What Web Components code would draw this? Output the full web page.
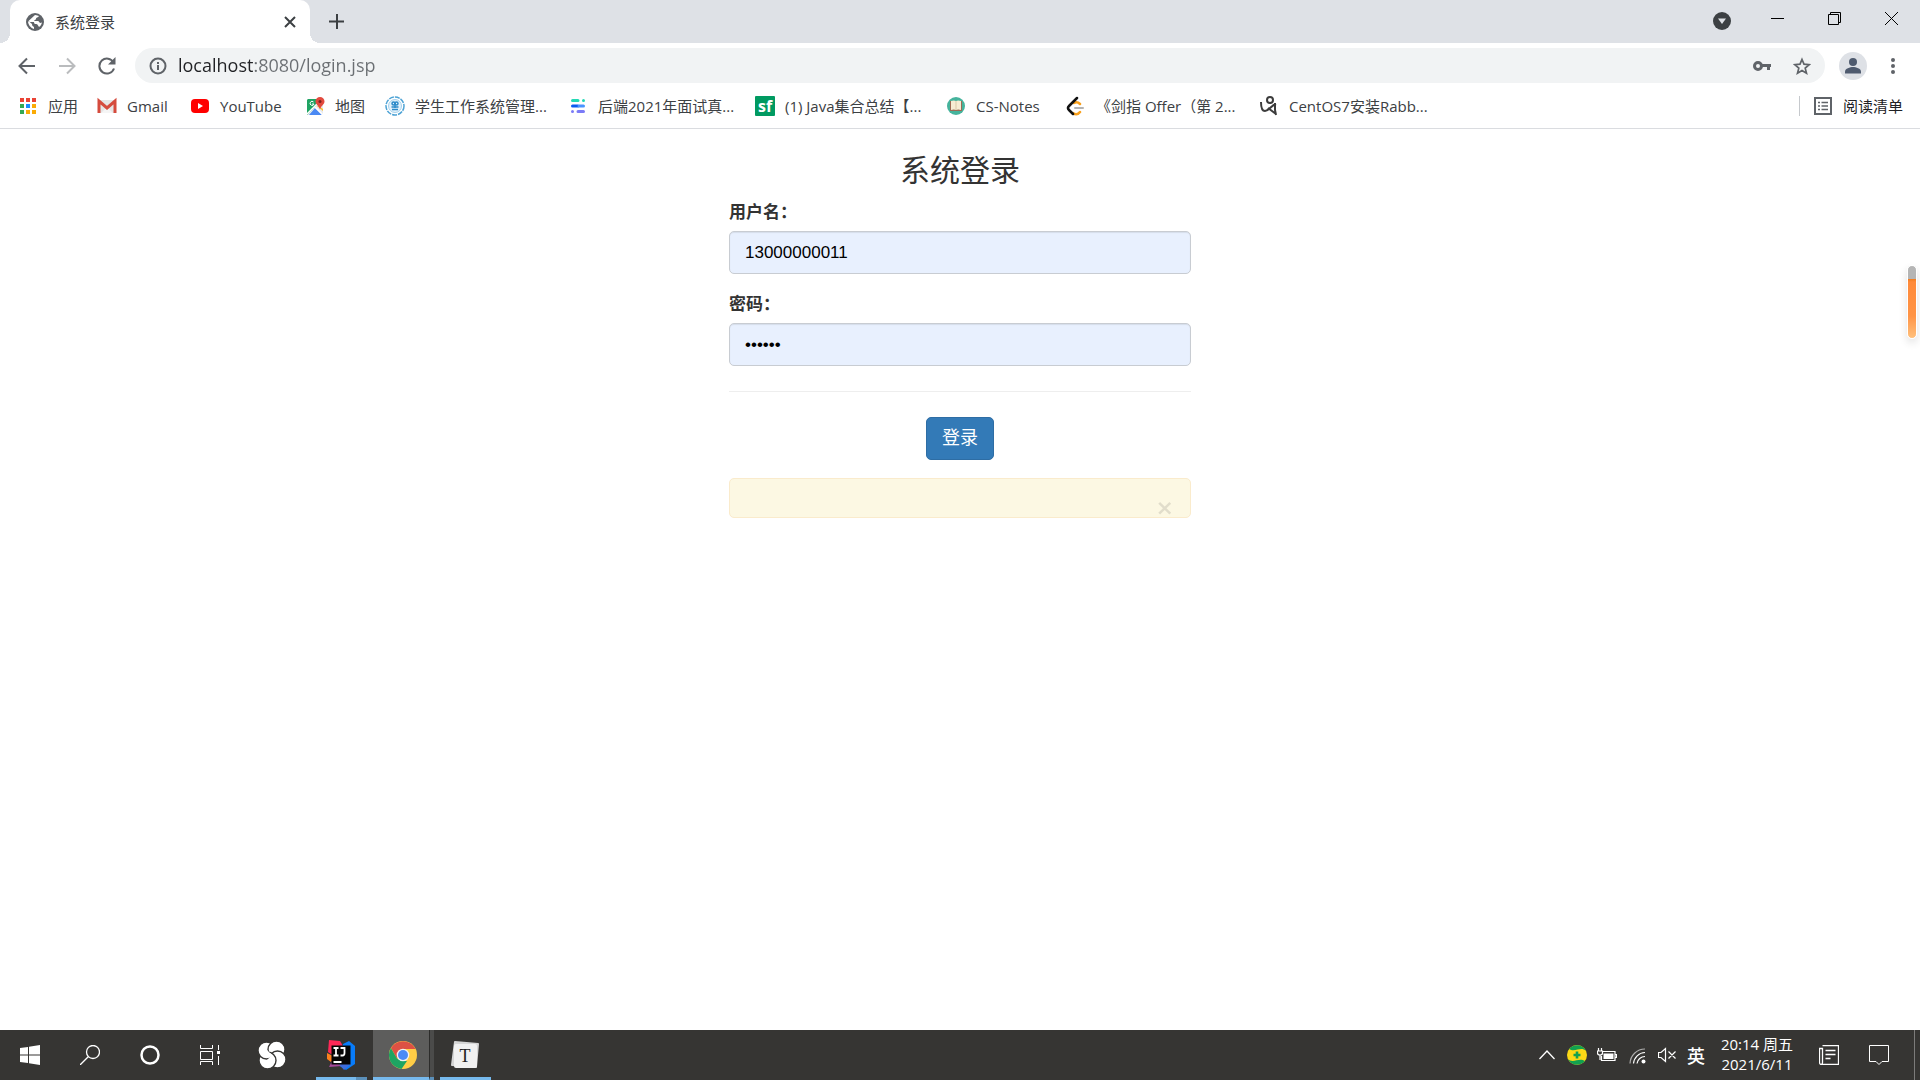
<!DOCTYPE html>
<html lang="zh-CN">
<head>
<meta charset="utf-8">
<title>系统登录</title>
<style>
    body {
        margin: 0;
        min-height: 100vh;
        display: flex;
        flex-direction: column;
        background: #fff;
        font-family: "Open Sans", "Noto Sans CJK SC", sans-serif;
        font-size: 15px;
        color: #3c4043;
    }
    main { flex: 1; }
</style>
</head>
<body>
<tab-strip>
    <browser-tab>系统登录</browser-tab>
</tab-strip>
<nav-bar></nav-bar>
<bookmark-bar>
    <book-mark>
        <svg slot="icon" width="20" height="20" viewBox="0 0 20 20"><g fill="#ea4335"><path d="M2 2h4v4H2zM8 2h4v4H8zM14 2h4v4h-4z"/></g><path fill="#34a853" d="M2 8h4v4H2zM2 14h4v4H2z"/><path fill="#1a8cff" d="M8 8h4v4H8z"/><path fill="#fbab05" d="M14 8h4v4h-4zM8 14h4v4H8zM14 14h4v4h-4z"/></svg>
        应用
    </book-mark>
    <book-mark>
        <svg slot="icon" width="20" height="20" viewBox="0 0 20 20"><path fill="#e5e5e5" d="M2 4h16v13H2z"/><path fill="#f5f5f5" d="M4 17l6-6 6 6z"/><path fill="none" stroke="#d54b3d" stroke-width="3" d="M2 17V5l8 7 8-7v12"/></svg>
        Gmail
    </book-mark>
    <book-mark>
        <svg slot="icon" width="20" height="20" viewBox="0 0 20 20"><rect x="1" y="3" width="18" height="14" rx="4" fill="#f00"/><path fill="#fff" d="M8 7l5 3-5 3z"/></svg>
        YouTube
    </book-mark>
    <book-mark>
        <svg slot="icon" width="20" height="20" viewBox="0 0 20 20"><rect x="2" y="3" width="16" height="16" rx="1" fill="#e8eaed"/><path fill="#1fa463" d="M3 3h11l-3 7-9 9V4z"/><path fill="#fbc02d" d="M14 10l4 3v2l-6-5z"/><path fill="#4a89f3" d="M4 19l6-7 7 7z"/><path stroke="#fff" stroke-width="1.500" d="M2 18l11-11M10 11l8 8"/><path fill="none" stroke="#fff" d="M8.500 6A2 2 0 1 0 9 8H7"/><path fill="#e24a3e" d="M15 1a4.500 4.500 0 0 1 4.500 4.500c0 3-3.500 4-4.500 8-1-4-4.500-5-4.500-8A4.500 4.500 0 0 1 15 1z"/><circle cx="15" cy="5.500" r="1.500" fill="#7b231e"/></svg>
        地图
    </book-mark>
    <book-mark>
        <svg slot="icon" width="20" height="20" viewBox="0 0 20 20"><circle cx="10" cy="10" r="9" fill="#fff" stroke="#4ea3d5" stroke-width="1.500" stroke-dasharray="5 1"/><circle cx="10" cy="10" r="6.500" fill="#e4f2fb" stroke="#a5d1ec"/><g fill="none" stroke="#2d8bc9" stroke-width="1.500"><circle cx="8.500" cy="7.500" r="1.500"/><circle cx="11.500" cy="7.500" r="1.500"/><path d="M10 6v6M6.500 11h7M7 13.500h6"/></g></svg>
        学生工作系统管理...
    </book-mark>
    <book-mark>
        <svg slot="icon" width="20" height="20" viewBox="0 0 20 20"><g stroke-width="3" stroke-linecap="round"><path stroke="#22d9b4" d="M4.500 4.500H10M15.500 4.500h0"/><path stroke="#0a5cf0" d="M4.500 10H10"/><path stroke="#4a94ff" d="M11 10h4.500"/><path stroke="#7b7bf7" d="M4.500 15.500h0M10 15.500h5.500"/></g></svg>
        后端2021年面试真...
    </book-mark>
    <book-mark>
        <svg slot="icon" width="20" height="20" viewBox="0 0 20 20"><rect width="20" height="20" rx="1" fill="#009a61"/><text x="10" y="16" text-anchor="middle" font-family="Open Sans" font-weight="700" font-size="16" fill="#fff">sf</text></svg>
        (1) Java集合总结【...
    </book-mark>
    <book-mark>
        <svg slot="icon" width="20" height="20" viewBox="0 0 20 20"><circle cx="10" cy="10" r="9" fill="#45b39c"/><path fill="#9b6a54" d="M4 5h12v10H4z"/><path fill="#f6ecd3" d="M5 5q3-1 5 0 2-1 5 0v9q-3-1-5 0-2-1-5 0z"/><path stroke="#d8c9a8" d="M10 5v9"/></svg>
        CS-Notes
    </book-mark>
    <book-mark>
        <svg slot="icon" width="20" height="20" viewBox="0 0 20 20"><g fill="none" stroke-width="2.500" stroke-linecap="round"><path stroke="#b3b3b3" stroke-width="2" d="M9 12h8"/><path stroke="#f9a01b" d="M14 8q-3-3-6-1M14 16q-3 4-7 1"/><path stroke="#111" d="M11 2L3 10q-2 2 0 4l4 4"/></g></svg>
        《剑指 Offer（第 2...
    </book-mark>
    <book-mark>
        <svg slot="icon" width="20" height="20" viewBox="0 0 20 20"><g fill="none" stroke="#3c3c3c" stroke-width="2"><circle cx="11" cy="4" r="3"/><path d="M2 6c0 4 1 9 4 9 4 0 5-5 11-7"/><path d="M16 7v7l1 5M9 12l8 6"/></g></svg>
        CentOS7安装Rabb...
    </book-mark>
    <book-mark slot="end">
        <svg slot="icon" width="20" height="20" viewBox="0 0 20 20"><rect x="2" y="2" width="16" height="16" fill="none" stroke="#5f6368" stroke-width="2"/><path stroke="#5f6368" stroke-width="1.500" d="M5 6.500h2M8.500 6.500H15M5 10h2M8.500 10H15M5 13.500h2M8.500 13.500H15"/></svg>
        阅读清单
    </book-mark>
</bookmark-bar>
<main>
    <login-form heading="系统登录">
        <form-field label="用户名：" name="username" type="text" value="13000000011"></form-field>
        <form-field label="密码：" name="password" type="password" value="123456"></form-field>
    </login-form>
</main>
<page-marker></page-marker>
<task-bar></task-bar>

<script>
function define(name, html, setup) {
    const template = document.createElement("template");
    template.innerHTML = html;

    customElements.define(name, class extends HTMLElement {
        constructor() {
            super();
            this.attachShadow({ mode: "open" });
            this.shadowRoot.appendChild(template.content.cloneNode(true));
        }

        connectedCallback() {
            if (setup) setup(this, this.shadowRoot);
        }
    });
}

// shared by every icon-only button
const BUTTON = `
    button {
        display: flex;
        align-items: center;
        justify-content: center;
        flex: none;
        padding: 0;
        border: 0;
        background: none;
        color: inherit;
        font: inherit;
    }
    svg { display: block; flex: none; }
`;

define("tab-strip", `
    <style>
        ${BUTTON}
        :host {
            display: flex;
            height: 43px;
            padding-left: 10px;
            background: #dee1e6;
        }
        .new { width: 54px; }
        .window { display: flex; margin-left: auto; height: 37px; color: #000; }
        .window button { width: 57px; }
        .window .menu { width: 54px; margin-top: 5px; }
    </style>
    <slot></slot>
    <button class="new" aria-label="New tab"><svg width="16" height="16" viewBox="0 0 16 16"><path stroke="#3c4043" stroke-width="2" d="M8 0v15M0 7.500h15"/></svg></button>
    <div class="window">
        <button class="menu" aria-label="Search tabs"><svg width="18" height="18" viewBox="0 0 18 18"><circle cx="9" cy="9" r="9" fill="#3c4043"/><path fill="#dee1e6" d="M5 6.500h8L9 12z"/></svg></button>
        <button aria-label="Minimize"><svg width="13" height="13" viewBox="0 0 13 13"><path stroke="currentColor" d="M0 6.500h13"/></svg></button>
        <button aria-label="Restore"><svg width="13" height="13" viewBox="0 0 13 13"><path fill="none" stroke="currentColor" d="M.5 2.500h10v10H.5zM2.500 2.500v-2h10v10h-2"/></svg></button>
        <button aria-label="Close"><svg width="13" height="13" viewBox="0 0 13 13"><path stroke="currentColor" d="M0 0l13 13M13 0L0 13"/></svg></button>
    </div>
`);

define("browser-tab", `
    <style>
        ${BUTTON}
        :host {
            display: flex;
            align-items: center;
            box-sizing: border-box;
            width: 300px;
            padding: 0 14px 0 16px;
            border-radius: 10px 10px 0 0;
            background: #fff;
            position: relative;
        }
        :host::before, :host::after {
            content: "";
            position: absolute;
            bottom: 0;
            width: 10px;
            height: 10px;
        }
        :host::before { left: -10px; background: radial-gradient(circle at 0 0, transparent 10px, #fff 10px); }
        :host::after { right: -10px; background: radial-gradient(circle at 100% 0, transparent 10px, #fff 10px); }
        .title { flex: 1; padding-left: 11px; }
    </style>
    <svg width="18" height="18" viewBox="0 0 18 18"><circle cx="9" cy="9" r="9" fill="#5f6368"/><path fill="#fff" d="M9 2c2 0 3 1 4 1-1 2-3 1-3 3 0 1-2 1-2 2h4c1 0 1 2 3 2 1-1 1-1 1-1 0 1-1 4-3 5-1-1-1-3-3-3-1 0-2 0-2-2H3L2 8c0 4 3 7 6 8v-2c-1-1-2-1-2-3L2.500 8z"/></svg>
    <span class="title"><slot></slot></span>
    <button aria-label="Close tab"><svg width="12" height="12" viewBox="0 0 12 12"><path stroke="#3c4043" stroke-width="2" d="M1 1l10 10M11 1L1 11"/></svg></button>
`);

define("nav-bar", `
    <style>
        ${BUTTON}
        :host {
            display: flex;
            align-items: center;
            padding: 5px 7px 6px;
            color: #5f6368;
        }
        button { width: 40px; }
        .omnibox {
            flex: 1;
            display: flex;
            align-items: center;
            height: 35px;
            margin: 0 8px;
            padding: 0 3px 0 14px;
            border-radius: 18px;
            background: #f1f3f4;
        }
        /* host name in black, the rest of the address in grey */
        input {
            flex: 1;
            min-width: 0;
            margin-left: 11px;
            padding: 0 0 2px;
            border: 0;
            outline: 0;
            font-family: inherit;
            font-size: 18px;
            color: transparent;
            background: linear-gradient(90deg, #202124 77px, #6b6f73 77px);
            -webkit-background-clip: text;
            background-clip: text;
        }
    </style>
    <button aria-label="Back"><svg width="18" height="18" viewBox="0 0 18 18"><path fill="none" stroke="currentColor" stroke-width="2" d="M17 9H2M9 1.500L1.500 9 9 16.500"/></svg></button>
    <button aria-label="Forward"><svg width="18" height="18" viewBox="0 0 18 18"><path fill="none" stroke="#babcbe" stroke-width="2" d="M1 9h15M9 1.500L16.500 9 9 16.500"/></svg></button>
    <button aria-label="Reload"><svg width="18" height="18" viewBox="0 0 18 18"><path fill="none" stroke="currentColor" stroke-width="2" d="M15.500 5.500A7.500 7.500 0 1 0 16 11.500"/><path fill="currentColor" d="M17.500 0v7.500H10z"/></svg></button>
    <div class="omnibox">
        <svg width="18" height="18" viewBox="0 0 18 18"><circle cx="9" cy="9" r="7.500" fill="none" stroke="currentColor" stroke-width="2"/><path stroke="currentColor" stroke-width="2" d="M9 8v5M9 5v2"/></svg>
        <input type="text" aria-label="Address" value="localhost:8080/login.jsp">
        <button aria-label="Passwords"><svg width="18" height="18" viewBox="0 0 18 18"><circle cx="5" cy="9" r="3.500" fill="none" stroke="currentColor" stroke-width="3"/><path fill="currentColor" d="M8 7h10v3h-1v3h-3v-3H8z"/></svg></button>
        <button aria-label="Bookmark"><svg width="18" height="18" viewBox="0 0 18 18"><path fill="none" stroke="currentColor" stroke-width="1.700" d="M9 2.500l2 4.700 5.200.5-4 3.400 1.300 5.100L9 13.500l-4.500 2.700 1.300-5.100-4-3.400 5.200-.5z"/></svg></button>
    </div>
    <button aria-label="Profile"><svg width="28" height="28" viewBox="0 0 28 28"><circle cx="14" cy="14" r="14" fill="#dee1e6"/><g fill="#4f5b6f"><circle cx="14" cy="10" r="4"/><path d="M6 21.500v-2c0-3 5-4.500 8-4.500s8 1.500 8 4.500v2z"/></g></svg></button>
    <button aria-label="Menu"><svg width="18" height="18" viewBox="0 0 18 18" fill="currentColor"><circle cx="9" cy="3" r="2"/><circle cx="9" cy="9" r="2"/><circle cx="9" cy="15" r="2"/></svg></button>
`);

define("bookmark-bar", `
    <style>
        :host {
            display: flex;
            align-items: center;
            justify-content: space-between;
            height: 34px;
            padding: 0 17px 5px 18px;
            border-bottom: 1px solid #dadce0;
        }
        nav {
            display: grid;
            grid-template-columns: 79px 93px 115px 80px 183px 187px 191px 120px 193px auto;
        }
        .end {
            display: flex;
            height: 20px;
            padding-left: 13px;
            border-left: 1px solid #c6c9cd;
            color: #202124;
        }
    </style>
    <nav><slot></slot></nav>
    <div class="end"><slot name="end"></slot></div>
`);

define("book-mark", `
    <style>
        :host { display: block; }
        a {
            display: flex;
            align-items: center;
            gap: 10px;
            color: inherit;
            text-decoration: none;
            white-space: nowrap;
            line-height: 20px;
        }
        ::slotted(svg) { display: block; flex: none; }
    </style>
    <a href="#"><slot name="icon"></slot><span><slot></slot></span></a>
`);

define("login-form", `
    <style>
        ${BUTTON}
        :host {
            display: block;
            box-sizing: border-box;
            width: 462px;
            max-width: 100%;
            margin: 25px auto 0;
            font-family: "Liberation Sans", "Noto Sans CJK SC", sans-serif;
            font-size: 18px;
            line-height: 25px;
            color: #333;
        }
        h3 {
            margin: 0 0 13px;
            font-size: 30px;
            font-weight: 400;
            line-height: 33px;
            text-align: center;
        }
        hr {
            margin: 25px 0;
            border: 0;
            border-top: 1px solid #eee;
        }
        .submit {
            box-sizing: border-box;
            height: 43px;
            margin: 0 auto 18px;
            padding: 0 15px;
            border: 1px solid #2e6da4;
            border-radius: 5px;
            background: #337ab7;
            color: #fff;
        }
        .alert {
            display: flex;
            justify-content: flex-end;
            box-sizing: border-box;
            height: 40px;
            padding: 18px 16px 0;
            border: 1px solid #faebcc;
            border-radius: 5px;
            background: #fcf8e3;
        }
        .close {
            height: 22px;
            font-family: "DejaVu Sans", sans-serif;
            font-size: 22px;
            font-weight: 700;
            line-height: 22px;
            color: #000;
            opacity: .1;
        }
    </style>
    <h3></h3>
    <form>
        <slot></slot>
        <hr>
        <button class="submit" type="submit">登录</button>
    </form>
    <div class="alert" role="alert"><button class="close" type="button" aria-label="Close">×</button></div>
`, (host, root) => {
    root.querySelector("h3").textContent = host.getAttribute("heading");
    root.querySelector("form").addEventListener("submit", (e) => e.preventDefault());
});

define("form-field", `
    <style>
        :host { display: block; margin-bottom: 18px; }
        label { display: block; margin-bottom: 6px; font-size: 17px; font-weight: 700; }
        input {
            display: block;
            box-sizing: border-box;
            width: 100%;
            height: 43px;
            padding: 0 15px;
            border: 1px solid #c8ccd2;
            border-radius: 5px;
            background: #e8f0fe;
            box-shadow: inset 0 1px 1px rgba(0, 0, 0, .08);
            font-family: inherit;
            font-size: 17px;
            color: #000;
        }
    </style>
    <label for="field"></label>
    <input id="field">
`, (host, root) => {
    const input = root.querySelector("input");
    root.querySelector("label").textContent = host.getAttribute("label");
    input.type = host.getAttribute("type");
    input.name = host.getAttribute("name");
    input.value = host.getAttribute("value");
});

// small desktop gadget floating over the right edge
define("page-marker", `
    <style>
        :host {
            position: absolute;
            top: 265px;
            right: 3px;
            box-sizing: border-box;
            width: 10px;
            height: 74px;
            border: 1px solid #fff;
            border-radius: 5px;
            background: linear-gradient(#b5b5b5 13px, #f07d1f 13px, #ff8a3a 16px, #ff9446 50px, #ffc07c);
            box-shadow: 0 4px 8px rgba(0, 0, 0, .12);
        }
    </style>
`);

define("task-button", `
    <style>
        ${BUTTON}
        :host { display: flex; width: 60px; height: 50px; box-sizing: border-box; }
        button { flex: 1; }
        :host([running]) { width: 51px; border-bottom: 3px solid #76b9ed; }
        :host([running]) button { height: 50px; }
        :host([active]) { background: #5d5d5c; }
    </style>
    <button><slot></slot></button>
`, (host, root) => {
    root.querySelector("button").setAttribute("aria-label", host.getAttribute("label"));
});

define("task-bar", `
    <style>
        ${BUTTON}
        :host {
            display: flex;
            height: 50px;
            background: #363533;
            color: #fff;
        }
        .apps, .tray { display: flex; align-items: center; }
        .apps { flex: 1; }
        .group { display: flex; margin-right: 6px; }
        .assistant { width: 64px; }
        .idea { width: 40px; padding-left: 10px; margin-left: 12px; }
        .chrome { width: 56px; padding-left: 4px; }
        .typora { padding-right: 2px; }
        .stack {
            width: 4px;
            border-left: 1px solid #2c2c2b;
            border-bottom: 3px solid #5b90ba;
            background: #4b4b4a;
        }
        .stack.wide { width: 11px; border-left: 0; background: none; }
        .tray > button { height: 50px; width: 30px; }
        .tray > .ime { width: 28px; font-size: 18px; font-weight: 500; }
        .tray > .clock {
            box-sizing: border-box;
            width: 94px;
            padding-bottom: 2px;
            flex-direction: column;
            line-height: 20px;
        }
        .tray > .wide { width: 50px; }
        .desktop { height: 50px; width: 5px; margin-left: 10px; border-left: 1px solid #7c7b7a; }
    </style>
    <div class="apps">
        <task-button label="Start"><svg width="20" height="20" viewBox="0 0 20 20"><path fill="#fff" d="M0 3l8-1v7.500H0zM9 1.800L20 0v9.500H9zM0 10.500h8V18l-8-1zM9 10.500h11V20L9 18.200z"/></svg></task-button>
        <task-button label="Search"><svg width="20" height="20" viewBox="0 0 20 20"><g fill="none" stroke="#fff" stroke-width="1.300"><circle cx="13" cy="7" r="6.500"/><path d="M8.500 11.500L0 20"/></g></svg></task-button>
        <task-button label="Cortana"><svg width="20" height="20" viewBox="0 0 20 20"><circle cx="10" cy="10" r="8.500" fill="none" stroke="#fff" stroke-width="2.500"/></svg></task-button>
        <task-button label="Task view"><svg width="20" height="20" viewBox="0 0 20 20"><path fill="none" stroke="#fff" d="M.5 0v3.500h12V0M.5 6.500h12v8H.5zM.5 20v-3.500h12V20M18.500 0v5M18.500 11v9"/><path fill="#fff" d="M17 6h3v3h-3z"/></svg></task-button>
        <task-button class="assistant" label="Assistant"><svg width="28" height="28" viewBox="0 0 28 28"><clipPath id="half"><path d="M0 0l14 14L0 28z"/></clipPath><g fill="#fff" stroke="#363533" stroke-width="1.400"><circle cx="8.500" cy="9.500" r="8.500"/><circle cx="18.500" cy="8.500" r="8.500"/><circle cx="19.500" cy="18.500" r="8.500"/><circle cx="9.500" cy="19.500" r="8.500"/><circle cx="8.500" cy="9.500" r="8.500" clip-path="url(#half)"/></g></svg></task-button>
        <div class="group">
            <task-button class="idea" running label="IntelliJ IDEA"><svg width="30" height="30" viewBox="0 0 30 30"><path fill="#fc801d" d="M1 13l8 4-4 5-4-3z"/><path fill="#fe2857" d="M3 0l11 1 3 5-6 12-9-6z"/><path fill="#087cfa" d="M17 4l6-3 6 5v18l-9 6-8-5z"/><path fill="#a6489b" d="M9 15l-6 12 13-1 1-6z"/><path fill="#3e6ddb" d="M13 24h12l-7 6z"/><rect x="5.500" y="5.500" width="19" height="19" fill="#060606"/><path fill="none" stroke="#fff" stroke-width="1.800" d="M7.500 8h5M10 8v7M7.500 15.500h5M14.500 8h4v5q0 2.500-2 2.500h-2"/><path fill="#fff" d="M7.500 21h8v2h-8z"/></svg></task-button>
            <div class="stack wide"></div>
        </div>
        <div class="group">
            <task-button class="chrome" running active label="Chrome"><svg width="28" height="28" viewBox="0 0 28 28"><circle cx="14" cy="14" r="14" fill="#ffcd46"/><path fill="#dd5144" d="M2 7a14 14 0 0 1 24 0a14 14 0 0 1 .5 1H14l-6 9.500z"/><path fill="#1da462" d="M1.900 7L8 17.500l6 2.500 4 0-5.500 8A14 14 0 0 1 1.900 7z"/><circle cx="14" cy="14" r="6.300" fill="#f1f1f1"/><circle cx="14" cy="14" r="5" fill="#4c8bf5"/></svg></task-button>
            <div class="stack"></div>
        </div>
        <task-button class="typora" running label="Typora"><svg width="28" height="28" viewBox="0 0 28 28"><path fill="#d6d6d6" stroke="#d6d6d6" stroke-width="2" stroke-linejoin="round" d="M4 1l23 2-2 23-24-2z"/><rect x="3" y="3" width="23" height="24" rx="2" fill="#f1f1f1"/><text x="14" y="21" text-anchor="middle" font-family="Liberation Serif" font-size="18" fill="#222">T</text></svg></task-button>
    </div>
    <div class="tray">
        <button aria-label="Show hidden icons"><svg width="16" height="10" viewBox="0 0 16 10"><path fill="none" stroke="#fff" stroke-width="1.300" d="M.5 9L8 1l7.500 8"/></svg></button>
        <button aria-label="Security"><svg width="20" height="20" viewBox="0 0 20 20"><circle cx="10" cy="10" r="10" fill="#fbd816"/><path fill="#12a150" d="M2 4a10 10 0 0 1 17 2C14 1 8 8 2 4zM18 16A10 10 0 0 1 1 14c5 5 11-2 17 2zM8.700 6.500h2.600v2.200h2.200v2.600h-2.200v2.200H8.700v-2.200H6.500V8.700h2.200z"/></svg></button>
        <button aria-label="Battery"><svg width="20" height="16" viewBox="0 0 20 16"><path fill="none" stroke="#fff" stroke-width="1.200" d="M6 4.500h12v9H4.500V9M18 7.500h1.500v3H18M1.500 1v3M4.500 1v3M.5 4h5v2q0 2-2.500 2T.5 6zM3 8v5"/><path fill="#fff" d="M6.500 6.500h10v5.500h-10z"/></svg></button>
        <button aria-label="Network"><svg width="17" height="17" viewBox="0 0 17 17"><g fill="none" stroke="#fff" stroke-width="1.200"><path d="M1 16.500A15 15 0 0 1 16 2" opacity=".6"/><path d="M4.500 16.500A12 12 0 0 1 16 5.500M8 16.500a8 8 0 0 1 8-7"/></g><circle cx="14.500" cy="14.500" r="2" fill="#fff"/></svg></button>
        <button aria-label="Volume"><svg width="18" height="16" viewBox="0 0 18 16"><path fill="none" stroke="#fff" stroke-width="1.200" d="M.5 5.500H3L7.500 1.500v13L3 10.500H.5zM10.500 4.500l7 7M17.500 4.500l-7 7"/></svg></button>
        <button class="ime" aria-label="Input method">英</button>
        <button class="clock"><span>20:14 周五</span><span>2021/6/11</span></button>
        <button class="wide" aria-label="News"><svg width="20" height="20" viewBox="0 0 20 20"><path fill="none" stroke="#fff" stroke-width="1.300" d="M3.500.5h16v19H2.500Q.5 19.500.5 17V3.500h3v14q0 2-1.500 2M6.500 5.500h10M6.500 9.500h10M6.500 13.500h5"/></svg></button>
        <button class="wide" aria-label="Notifications"><svg width="20" height="20" viewBox="0 0 20 20"><path fill="none" stroke="#fff" d="M.5.500h19v16H13l-3 3-3-3H.5z"/></svg></button>
        <div class="desktop"></div>
    </div>
`);
</script>
</body>
</html>
